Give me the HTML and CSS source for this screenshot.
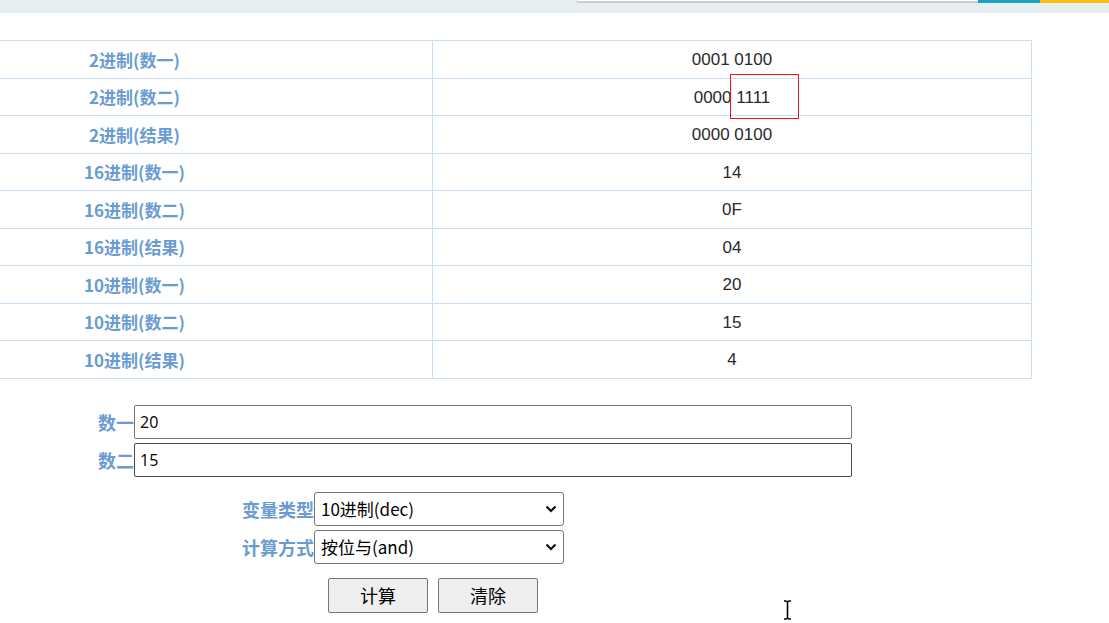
FILE: index.html
```html
<!DOCTYPE html>
<html lang="zh-CN">
<head>
<meta charset="utf-8">
<title>进制位运算</title>
<link rel="stylesheet" href="styles.css">
</head>
<body>
<div class="topbar">
  <div class="search"></div>
  <div class="stripe teal"></div>
  <div class="stripe yellow"></div>
</div>
<main class="main">
  <table class="result">
    <tr><th>2进制(数一)</th><td>0001 0100</td></tr>
    <tr><th>2进制(数二)</th><td>0000 1111</td></tr>
    <tr><th>2进制(结果)</th><td>0000 0100</td></tr>
    <tr><th>16进制(数一)</th><td>14</td></tr>
    <tr><th>16进制(数二)</th><td>0F</td></tr>
    <tr><th>16进制(结果)</th><td>04</td></tr>
    <tr><th>10进制(数一)</th><td>20</td></tr>
    <tr><th>10进制(数二)</th><td>15</td></tr>
    <tr><th>10进制(结果)</th><td>4</td></tr>
  </table>

  <form class="form">
    <div class="row row-num">
      <label class="lbl">数一</label>
      <input class="num" type="text" value="20">
    </div>
    <div class="row row-num">
      <label class="lbl">数二</label>
      <input class="num num-hover" type="text" value="15">
    </div>
    <div class="row row-sel first-sel">
      <label class="lbl">变量类型</label>
      <div class="sel">
        <span class="sel-text">10进制(dec)</span>
        <svg class="chev" width="12" height="8" viewBox="0 0 12 8"><path d="M1.5 1.5 L6 6 L10.5 1.5" fill="none" stroke="#111" stroke-width="2.2"/></svg>
      </div>
    </div>
    <div class="row row-sel">
      <label class="lbl">计算方式</label>
      <div class="sel">
        <span class="sel-text">按位与(and)</span>
        <svg class="chev" width="12" height="8" viewBox="0 0 12 8"><path d="M1.5 1.5 L6 6 L10.5 1.5" fill="none" stroke="#111" stroke-width="2.2"/></svg>
      </div>
    </div>
    <div class="row row-btn">
      <button type="button" class="btn">计算</button>
      <button type="button" class="btn">清除</button>
    </div>
  </form>
</main>
<div class="highlight"></div>
<svg class="ibeam" width="9" height="20" viewBox="0 0 9 20">
  <path d="M1 1 H3.5 M5.5 1 H8 M3.5 1.5 H5.5 M4.5 1 V19 M1 19 H3.5 M5.5 19 H8 M3.5 18.5 H5.5" stroke="#000" stroke-width="1.6" fill="none"/>
</svg>
</body>
</html>
```

FILE: styles.css
```css
html, body {
  margin: 0;
  padding: 0;
  background: #fff;
  overflow: hidden;
}
body {
  position: relative;
  width: 1109px;
  height: 623px;
  font-family: "Liberation Sans", "Noto Sans CJK SC", sans-serif;
  color: #222;
}
.topbar {
  height: 13px;
  background: #e7eef0;
  display: flex;
  justify-content: flex-end;
  align-items: flex-start;
}
.search {
  width: 401px;
  height: 1px;
  background: #fff;
  border-bottom: 2px solid #c9ced9;
  border-left: 1px solid #dfe3ea;
  border-bottom-left-radius: 2px;
}
.stripe { height: 3px; }
.teal { width: 62px; background: #1ba4bd; }
.yellow { width: 69px; background: #fdbf0f; }

.main {
  padding-top: 27px;
}
.result {
  margin-left: -164px;
  width: 1196px;
  border-collapse: collapse;
  table-layout: fixed;
}
.result th, .result td {
  border: 1px solid #c9dff3;
  height: 36.5px;
  padding: 0;
  text-align: center;
  vertical-align: middle;
}
.result th {
  font-family: "Noto Sans CJK SC", sans-serif;
  font-weight: 700;
  font-size: 17px;
  color: #6a9bd1;
  width: 595px;
}
.result td {
  font-family: "Liberation Sans", "Noto Sans CJK SC", sans-serif;
  font-size: 17px;
  color: #2a2a2a;
  height: 34.5px;
  padding-top: 2px;
}

.form {
  padding-top: 26px;
}
.row {
  display: flex;
  align-items: center;
}
.lbl {
  font-family: "Noto Sans CJK SC", sans-serif;
  font-weight: 700;
  font-size: 18px;
  color: #6a9bd1;
  line-height: 34px;
  text-align: right;
}
.row-num {
  padding-left: 97px;
  margin-bottom: 4px;
}
.row-num .lbl { width: 37px; }
.num {
  box-sizing: border-box;
  width: 718px;
  height: 34px;
  margin: 0;
  border: 1px solid #767676;
  border-radius: 2px;
  padding: 0 5px;
  font-family: "Open Sans", "Noto Sans", sans-serif;
  font-size: 16px;
  color: #000;
  background: #fff;
}
.num-hover { border-color: #4a4a4a; }

.row-sel {
  padding-left: 240px;
  margin-bottom: 4px;
}
.first-sel { margin-top: 15px; }
.row-sel .lbl { width: 74px; }
.sel {
  box-sizing: border-box;
  width: 250px;
  height: 34px;
  border: 1px solid #767676;
  border-radius: 3px;
  display: flex;
  align-items: center;
  justify-content: space-between;
  padding: 0 6px 0 6px;
  background: #fff;
}
.sel-text {
  font-family: "Noto Sans CJK SC", sans-serif;
  font-size: 17px;
  color: #000;
}
.chev { display: block; }

.row-btn {
  padding-left: 328px;
  margin-top: 14px;
  gap: 10px;
}
.btn {
  box-sizing: border-box;
  width: 100px;
  height: 35px;
  margin: 0;
  border: 1px solid #767676;
  border-radius: 2px;
  background: #efefef;
  font-family: "Noto Sans CJK SC", sans-serif;
  font-size: 18px;
  color: #000;
  padding: 0;
}

.highlight {
  position: absolute;
  left: 730px;
  top: 74px;
  width: 67px;
  height: 43px;
  border: 1px solid #e8161b;
}
.ibeam {
  position: absolute;
  left: 783px;
  top: 600px;
}
```
